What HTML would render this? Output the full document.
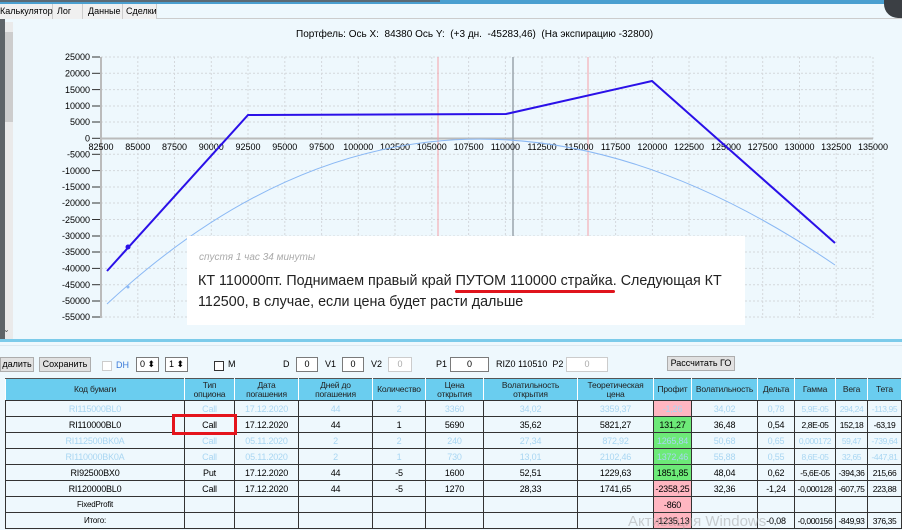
<!DOCTYPE html>
<html><head><meta charset="utf-8"><style>
*{margin:0;padding:0;box-sizing:border-box}
body{width:902px;height:530px;overflow:hidden;background:#eef8fd;font-family:"Liberation Sans","Noto Sans CJK SC",sans-serif;position:relative;color:#000}
.abs{position:absolute}
.tab{position:absolute;top:4px;height:15px;font-size:9px;line-height:14px;padding-left:3px;border-right:1px solid #ccc;background:#f0f0f0}
table{position:absolute;left:5px;top:378px;border-collapse:collapse;table-layout:fixed;font-size:9px}
td{border:1px solid #333;height:16px;text-align:center;overflow:hidden;white-space:nowrap;padding:0;letter-spacing:-0.2px}
tr.h td{height:22px;background:#6acdef;font-size:8.5px;line-height:9px;color:#222;border-color:#555 #fff #333 #fff}
tr.f td{color:#a9d6f2}
td.g{font-size:8.5px;letter-spacing:-0.4px}
.pk{background:#ffb6c1}.gr{background:#6dea78}
.btn{position:absolute;background:#e1e1e1;border:1px solid #adadad;font-size:9px;text-align:center;line-height:13px}
.inp{position:absolute;background:#fff;border:1px solid #7a7a7a;font-size:9px;text-align:center;line-height:13px;height:15px}
.lbl{position:absolute;font-size:9px}
</style></head><body>
<div class="abs" style="left:0;top:0;width:902px;height:4px;background:#4a9fd0"></div>
<div class="abs" style="left:0;top:0;width:440px;height:2px;background:#5b6a75"></div>
<div class="abs" style="left:0;top:18px;width:902px;height:1px;background:#ccc"></div>
<div class="tab" style="left:0;width:53px;padding-left:0">Калькулятор</div>
<div class="tab" style="left:53px;width:30px;padding-left:4px">Лог</div>
<div class="tab" style="left:83px;width:40px;padding-left:5px">Данные</div>
<div class="tab" style="left:123px;width:34px">Сделки</div>
<div class="abs" style="left:0;top:19px;width:5px;height:320px;background:#5e6468"></div>
<div class="abs" style="left:5px;top:22px;width:8px;height:318px;background:#eaeaea"></div>
<div class="abs" style="left:5px;top:32px;width:8px;height:90px;background:#cdcdcd"></div>
<div class="abs" style="left:884px;top:0;width:18px;height:18px;border-radius:0 0 0 14px;background:#3b3f44"></div>
<div class="lbl" style="left:296px;top:29px;font-size:10px">Портфель: Ось X: &nbsp;84380 Ось Y: &nbsp;(+3 дн. &nbsp;-45283,46) &nbsp;(На экспирацию -32800)</div>
<svg class="abs" style="left:0;top:0" width="902" height="340" font-family="Liberation Sans" font-size="9">
<g stroke="#d4d8dc" stroke-dasharray="2,2" stroke-width="1">
<line x1="101" y1="57" x2="873" y2="57"/><line x1="101" y1="73.3" x2="873" y2="73.3"/><line x1="101" y1="89.6" x2="873" y2="89.6"/><line x1="101" y1="106" x2="873" y2="106"/><line x1="101" y1="122" x2="873" y2="122"/>
<line x1="101" y1="154.3" x2="873" y2="154.3"/><line x1="101" y1="170.6" x2="873" y2="170.6"/><line x1="101" y1="187" x2="873" y2="187"/><line x1="101" y1="203" x2="873" y2="203"/><line x1="101" y1="219.5" x2="873" y2="219.5"/><line x1="101" y1="236" x2="873" y2="236"/><line x1="101" y1="252" x2="873" y2="252"/><line x1="101" y1="268.4" x2="873" y2="268.4"/><line x1="101" y1="284.7" x2="873" y2="284.7"/><line x1="101" y1="301" x2="873" y2="301"/><line x1="101" y1="317" x2="873" y2="317"/>
<line x1="137.8" y1="57" x2="137.8" y2="318"/><line x1="174.5" y1="57" x2="174.5" y2="318"/><line x1="211.3" y1="57" x2="211.3" y2="318"/><line x1="248" y1="57" x2="248" y2="318"/><line x1="284.8" y1="57" x2="284.8" y2="318"/><line x1="321.6" y1="57" x2="321.6" y2="318"/><line x1="358.3" y1="57" x2="358.3" y2="318"/><line x1="395" y1="57" x2="395" y2="318"/><line x1="431.8" y1="57" x2="431.8" y2="318"/><line x1="468.6" y1="57" x2="468.6" y2="318"/><line x1="505.4" y1="57" x2="505.4" y2="318"/><line x1="542" y1="57" x2="542" y2="318"/><line x1="578.9" y1="57" x2="578.9" y2="318"/><line x1="615.6" y1="57" x2="615.6" y2="318"/><line x1="652.4" y1="57" x2="652.4" y2="318"/><line x1="689" y1="57" x2="689" y2="318"/><line x1="726" y1="57" x2="726" y2="318"/><line x1="762.7" y1="57" x2="762.7" y2="318"/><line x1="799.5" y1="57" x2="799.5" y2="318"/><line x1="836.2" y1="57" x2="836.2" y2="318"/><line x1="873" y1="57" x2="873" y2="318"/>
</g>
<line x1="101" y1="57" x2="101" y2="318" stroke="#bbb" stroke-width="2"/>
<line x1="101" y1="138.5" x2="873" y2="138.5" stroke="#bbb" stroke-width="2"/>
<line x1="438" y1="57" x2="438" y2="318" stroke="#f6a0a8"/>
<line x1="588" y1="57" x2="588" y2="318" stroke="#f6a0a8"/>
<line x1="513" y1="57" x2="513" y2="318" stroke="#9aa4ac" stroke-width="1.5"/>
<g stroke="#333"><line x1="92" y1="57" x2="100" y2="57"/><line x1="92" y1="73.3" x2="100" y2="73.3"/><line x1="92" y1="89.6" x2="100" y2="89.6"/><line x1="92" y1="106" x2="100" y2="106"/><line x1="92" y1="122" x2="100" y2="122"/><line x1="92" y1="138.3" x2="100" y2="138.3"/><line x1="92" y1="154.3" x2="100" y2="154.3"/><line x1="92" y1="170.6" x2="100" y2="170.6"/><line x1="92" y1="187" x2="100" y2="187"/><line x1="92" y1="203" x2="100" y2="203"/><line x1="92" y1="219.5" x2="100" y2="219.5"/><line x1="92" y1="236" x2="100" y2="236"/><line x1="92" y1="252" x2="100" y2="252"/><line x1="92" y1="268.4" x2="100" y2="268.4"/><line x1="92" y1="284.7" x2="100" y2="284.7"/><line x1="92" y1="301" x2="100" y2="301"/><line x1="92" y1="317" x2="100" y2="317"/></g>
<g text-anchor="end"><text x="90" y="60">25000</text><text x="90" y="76.5">20000</text><text x="90" y="93">15000</text><text x="90" y="109">10000</text><text x="90" y="125">5000</text><text x="90" y="141.5">0</text><text x="90" y="157.5">-5000</text><text x="90" y="174">-10000</text><text x="90" y="190">-15000</text><text x="90" y="206">-20000</text><text x="90" y="223">-25000</text><text x="90" y="239">-30000</text><text x="90" y="255">-35000</text><text x="90" y="271.5">-40000</text><text x="90" y="288">-45000</text><text x="90" y="304">-50000</text><text x="90" y="320">-55000</text></g>
<g text-anchor="middle"><text x="101" y="150">82500</text><text x="137.8" y="150">85000</text><text x="174.5" y="150">87500</text><text x="211.3" y="150">90000</text><text x="248" y="150">92500</text><text x="284.8" y="150">95000</text><text x="321.6" y="150">97500</text><text x="358.3" y="150">100000</text><text x="395" y="150">102500</text><text x="431.8" y="150">105000</text><text x="468.6" y="150">107500</text><text x="505.4" y="150">110000</text><text x="542" y="150">112500</text><text x="578.9" y="150">115000</text><text x="615.6" y="150">117500</text><text x="652.4" y="150">120000</text><text x="689" y="150">122500</text><text x="726" y="150">125000</text><text x="762.7" y="150">127500</text><text x="799.5" y="150">130000</text><text x="836.2" y="150">132500</text><text x="873" y="150">135000</text></g>
<path d="M107,304 Q440,-5 835,265" fill="none" stroke="#8ab8f4" stroke-width="1"/>
<circle cx="128" cy="287" r="1.5" fill="#8ab8f4"/>
<polyline points="107,271 248,115 506,114 652,81 835,243" fill="none" stroke="#2a10e8" stroke-width="2"/>
<circle cx="128" cy="247" r="2.5" fill="#2a10e8"/>
<text x="3" y="332" font-size="8" fill="#555">⌄</text>
</svg>
<div class="abs" style="left:187px;top:236px;width:558px;height:89px;background:#fff"></div>
<div class="lbl" style="left:199px;top:252px;font-size:10px;font-style:italic;color:#aaa">спустя 1 час 34 минуты</div>
<div class="lbl" style="left:198px;top:271px;font-size:14.3px;line-height:21px;color:#222;width:540px">КТ 110000пт. Поднимаем правый край ПУТОМ 110000 страйка. Следующая КТ 112500, в случае, если цена будет расти дальше</div>
<div class="abs" style="left:455px;top:290px;width:160px;height:3px;background:#e0141c;border-radius:2px"></div>
<div class="abs" style="left:0;top:339px;width:902px;height:3px;background:#7ccbea"></div>
<div class="abs" style="left:0;top:345px;width:902px;height:1px;background:#dce8ef"></div>
<div class="btn" style="left:0;top:357px;width:34px;height:15px">далить</div>
<div class="btn" style="left:39px;top:357px;width:52px;height:15px">Сохранить</div>
<div class="abs" style="left:102px;top:361px;width:10px;height:10px;border:1px solid #ccc;background:#fff"></div>
<div class="lbl" style="left:116px;top:360px;color:#3a7ad8">DH</div>
<div class="inp" style="left:136px;top:357px;width:23px">0 ⬍</div>
<div class="inp" style="left:165px;top:357px;width:23px">1 ⬍</div>
<div class="abs" style="left:214px;top:361px;width:10px;height:10px;border:1px solid #333;background:#fff"></div>
<div class="lbl" style="left:228px;top:359px">M</div>
<div class="lbl" style="left:283px;top:359px">D</div>
<div class="inp" style="left:296px;top:357px;width:22px">0</div>
<div class="lbl" style="left:325px;top:359px">V1</div>
<div class="inp" style="left:342px;top:357px;width:22px">0</div>
<div class="lbl" style="left:371px;top:359px">V2</div>
<div class="inp" style="left:388px;top:357px;width:24px;border-color:#ccc;color:#aaa">0</div>
<div class="lbl" style="left:436px;top:359px">P1</div>
<div class="inp" style="left:450px;top:357px;width:39px">0</div>
<div class="lbl" style="left:496px;top:359px">RIZ0 110510 &nbsp;P2</div>
<div class="inp" style="left:566px;top:357px;width:42px;border-color:#ccc;color:#aaa">0</div>
<div class="btn" style="left:667px;top:356px;width:68px;height:15px">Рассчитать ГО</div>
<table>
<colgroup><col style="width:179px"><col style="width:50px"><col style="width:64px"><col style="width:74px"><col style="width:53px"><col style="width:58px"><col style="width:94px"><col style="width:76px"><col style="width:38px"><col style="width:66px"><col style="width:37px"><col style="width:41px"><col style="width:32px"><col style="width:34px"></colgroup>
<tr class="h"><td>Код бумаги</td><td>Тип<br>опциона</td><td>Дата<br>погашения</td><td>Дней до<br>погашения</td><td>Количество</td><td>Цена<br>открытия</td><td>Волатильность<br>открытия</td><td>Теоретическая<br>цена</td><td>Профит</td><td>Волатильность</td><td>Дельта</td><td>Гамма</td><td>Вега</td><td>Тета</td></tr>
<tr class="f"><td>RI115000BL0</td><td>Call</td><td>17.12.2020</td><td>44</td><td>2</td><td>3360</td><td>34,02</td><td>3359,37</td><td class="pk">-1,26</td><td>34,02</td><td>0,78</td><td class="g">5,9E-05</td><td class="g">294,24</td><td class="g">-113,95</td></tr>
<tr><td>RI110000BL0</td><td>Call</td><td>17.12.2020</td><td>44</td><td>1</td><td>5690</td><td>35,62</td><td>5821,27</td><td class="gr">131,27</td><td>36,48</td><td>0,54</td><td class="g">2,8E-05</td><td class="g">152,18</td><td class="g">-63,19</td></tr>
<tr class="f"><td>RI112500BK0A</td><td>Call</td><td>05.11.2020</td><td>2</td><td>2</td><td>240</td><td>27,34</td><td>872,92</td><td class="gr">1265,84</td><td>50,68</td><td>0,65</td><td class="g">0,000172</td><td class="g">59,47</td><td class="g">-739,64</td></tr>
<tr class="f"><td>RI110000BK0A</td><td>Call</td><td>05.11.2020</td><td>2</td><td>1</td><td>730</td><td>13,01</td><td>2102,46</td><td class="gr">1372,46</td><td>55,88</td><td>0,55</td><td class="g">8,6E-05</td><td class="g">32,65</td><td class="g">-447,81</td></tr>
<tr><td>RI92500BX0</td><td>Put</td><td>17.12.2020</td><td>44</td><td>-5</td><td>1600</td><td>52,51</td><td>1229,63</td><td class="gr">1851,85</td><td>48,04</td><td>0,62</td><td class="g">-5,6E-05</td><td class="g">-394,36</td><td class="g">215,66</td></tr>
<tr><td>RI120000BL0</td><td>Call</td><td>17.12.2020</td><td>44</td><td>-5</td><td>1270</td><td>28,33</td><td>1741,65</td><td class="pk">-2358,25</td><td>32,36</td><td>-1,24</td><td class="g">-0,000128</td><td class="g">-607,75</td><td class="g">223,88</td></tr>
<tr><td style="font-size:8px">FixedProfit</td><td></td><td></td><td></td><td></td><td></td><td></td><td></td><td class="pk">-860</td><td></td><td></td><td></td><td></td><td></td></tr>
<tr><td style="font-size:8px">Итого:</td><td></td><td></td><td></td><td></td><td></td><td></td><td></td><td class="pk">-1235,13</td><td></td><td>-0,08</td><td class="g">-0,000156</td><td class="g">-849,93</td><td class="g">376,35</td></tr>
</table>
<div class="abs" style="left:172px;top:414px;width:65px;height:21px;border:3px solid #e4141c"></div>
<div class="lbl" style="left:628px;top:513px;font-size:15px;color:rgba(150,150,150,0.45)">Активация Windows</div>
</body></html>
